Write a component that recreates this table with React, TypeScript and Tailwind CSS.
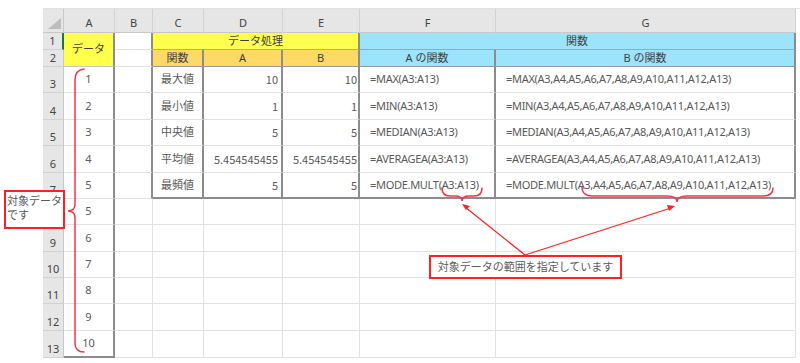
import React from 'react';

const FONT = "font-['Noto_Sans','Noto_Sans_CJK_JP',sans-serif]";

// rows 3..13 of the sheet
const bodyRows = [
  { n: 3, a: '1', c: '最大値', d: '10', e: '10', fn: 'MAX' },
  { n: 4, a: '2', c: '最小値', d: '1', e: '1', fn: 'MIN' },
  { n: 5, a: '3', c: '中央値', d: '5', e: '5', fn: 'MEDIAN' },
  { n: 6, a: '4', c: '平均値', d: '5.454545455', e: '5.454545455', fn: 'AVERAGEA' },
  { n: 7, a: '5', c: '最頻値', d: '5', e: '5', fn: 'MODE.MULT' },
  { n: 8, a: '5' },
  { n: 9, a: '6' },
  { n: 10, a: '7' },
  { n: 11, a: '8' },
  { n: 12, a: '9' },
  { n: 13, a: '10' },
];

const Cell = ({ className = '', children }: { className?: string; children?: React.ReactNode }) => (
  <div className={`flex items-center whitespace-nowrap overflow-visible ${className}`}>{children}</div>
);

const RowHead = ({ n, green = false }: { n: number; green?: boolean }) => (
  <div
    className={`flex items-end justify-center pb-[3px] leading-none bg-[#e6e6e6] text-[#444] border-b border-b-[#d2d2d2] ${
      green ? 'border-r-2 border-r-[#217346]' : 'border-r border-r-[#c8c8c8]'
    }`}
  >
    {n}
  </div>
);

const ColHead = ({ label }: { label: string }) => (
  <div className="flex justify-center pt-[6px] bg-[#e6e6e6] text-[#444] border-r border-b border-r-[#d2d2d2] border-b-[#c8c8c8]">
    {label}
  </div>
);

export default function App() {
  return (
    <div className={`relative w-[800px] h-[363px] bg-white overflow-hidden text-[11px] text-[#595959] ${FONT}`}>
      <div className="pt-[8px] pl-[43px]">
        <div className="grid grid-cols-[21px_51px_38px_51px_79px_77px_136px_300px] grid-rows-[24px_17px_17px_26px_27px_26px_27px_26px_26px_27px_26px_26px_27px_27px] border-t border-[#e0e0e0]">
          {/* column headers */}
          <div className="relative bg-[#e6e6e6] border-r border-b border-[#c8c8c8]">
            <svg className="absolute right-[2px] bottom-[3px]" width="13" height="11" viewBox="0 0 13 11">
              <polygon points="13,0 13,11 0,11" fill="#bdbdbd" />
            </svg>
          </div>
          {['A', 'B', 'C', 'D', 'E', 'F', 'G'].map((l) => (
            <ColHead key={l} label={l} />
          ))}

          {/* row 1 */}
          <RowHead n={1} green />
          <Cell className="row-span-2 justify-center bg-[#ffff4d] text-[#404040] border-r-2 border-b border-r-[#8c8c8c] border-b-[#c9c9c9]">
            データ
          </Cell>
          <Cell className="border-r-2 border-b border-r-[#8c8c8c] border-b-[#e2e2e2]" />
          <Cell className="col-span-3 justify-center bg-[#ffff4d] text-[#404040] border-r-2 border-b border-r-[#8c8c8c] border-b-[#b4b46a]">
            データ処理
          </Cell>
          <Cell className="col-span-2 justify-center bg-[#9ce4fb] text-[#404040] border-r-2 border-b border-r-[#8c8c8c] border-b-[#7fb3c4]">
            関数
          </Cell>

          {/* row 2 */}
          <RowHead n={2} />
          <Cell className="border-r-2 border-b border-r-[#8c8c8c] border-b-[#e2e2e2]" />
          <Cell className="justify-center bg-[#ffd966] text-[#404040] border-r-2 border-b border-r-[#8c8c8c] border-b-[#999]">
            関数
          </Cell>
          <Cell className="justify-center bg-[#ffd966] text-[#404040] border-r-2 border-b border-r-[#8c8c8c] border-b-[#999]">
            A
          </Cell>
          <Cell className="justify-center bg-[#ffd966] text-[#404040] border-r-2 border-b border-r-[#8c8c8c] border-b-[#999]">
            B
          </Cell>
          <Cell className="justify-center bg-[#9ce4fb] text-[#404040] border-r-2 border-b border-r-[#8c8c8c] border-b-[#999]">
            A の関数
          </Cell>
          <Cell className="justify-center bg-[#9ce4fb] text-[#404040] border-r-2 border-b border-r-[#8c8c8c] border-b-[#999]">
            B の関数
          </Cell>

          {/* rows 3..13 */}
          {bodyRows.map((r) => {
            const inTable = r.n <= 7;
            const last = r.n === 13;
            const tb = r.n === 7 ? 'border-b-2 border-b-[#8c8c8c]' : 'border-b border-b-[#e2e2e2]';
            const tr = inTable ? 'border-r-2 border-r-[#8c8c8c]' : 'border-r border-r-[#e2e2e2]';
            return (
              <React.Fragment key={r.n}>
                <RowHead n={r.n} />
                <Cell
                  className={`justify-center border-r-2 border-r-[#8c8c8c] ${
                    last ? 'border-b-2 border-b-[#8c8c8c]' : 'border-b border-b-[#e2e2e2]'
                  }`}
                >
                  {r.a}
                </Cell>
                <Cell className={`${tr} border-b border-b-[#e2e2e2]`} />
                <Cell className={`justify-center ${tr} ${inTable ? tb : 'border-b border-b-[#e2e2e2]'}`}>{r.c}</Cell>
                <Cell className={`justify-end pr-[3px] font-['Noto_Sans_CJK_JP',sans-serif] ${tr} ${inTable ? tb : 'border-b border-b-[#e2e2e2]'}`}>
                  {r.d}
                </Cell>
                <Cell className={`justify-end pr-[1px] font-['Noto_Sans_CJK_JP',sans-serif] ${tr} ${inTable ? tb : 'border-b border-b-[#e2e2e2]'}`}>
                  {r.e}
                </Cell>
                <Cell className={`pl-[10px] tracking-[-0.3px] ${tr} ${inTable ? tb : 'border-b border-b-[#e2e2e2]'}`}>
                  {r.fn ? `=${r.fn}(A3:A13)` : null}
                </Cell>
                <Cell className={`pl-[10px] tracking-[-0.3px] ${tr} ${inTable ? tb : 'border-b border-b-[#e2e2e2]'}`}>
                  {r.fn ? `=${r.fn}(A3,A4,A5,A6,A7,A8,A9,A10,A11,A12,A13)` : null}
                </Cell>
              </React.Fragment>
            );
          })}
        </div>
      </div>

      {/* red annotations */}
      <svg className="absolute inset-0 pointer-events-none" width="800" height="363" viewBox="0 0 800 363">
        <g fill="none" stroke="#ff3344" strokeWidth="1.5" strokeLinecap="round">
          <path d="M84 69 Q75 70 75 80 L75 204 Q75 211 68 211 Q75 211 75 218 L75 343 Q75 352 84 352" />
          <path d="M442 188 Q442 196 450 196 L455 196 Q462 196 462 201 Q462 196 469 196 L474 196 Q482 196 482 188" />
          <path d="M582 187 Q582 196 592 196 L667 196 Q677 196 677 202 Q677 196 687 196 L763 196 Q773 196 773 188" />
        </g>
        <g stroke="#ff2222" strokeWidth="1.3">
          <line x1="525" y1="255" x2="465" y2="207" />
          <line x1="525" y1="255" x2="671" y2="208" />
        </g>
        <g fill="#ff2222">
          <polygon points="462,204 470,206 466,210" />
          <polygon points="675,206 667,205 669,211" />
        </g>
      </svg>

      <div className="absolute left-[4px] top-[190px] w-[61px] h-[39px] bg-white border-2 border-[#ff2020] pl-[1px] pt-[2px] leading-[14px] whitespace-nowrap text-[#595959]">
        対象データ
        <br />
        です
      </div>
      <div className="absolute left-[429px] top-[255px] w-[193px] h-[24px] flex items-center justify-center whitespace-nowrap bg-white border-2 border-[#ff2020] text-[#595959]">
        対象データの範囲を指定しています
      </div>
    </div>
  );
}
